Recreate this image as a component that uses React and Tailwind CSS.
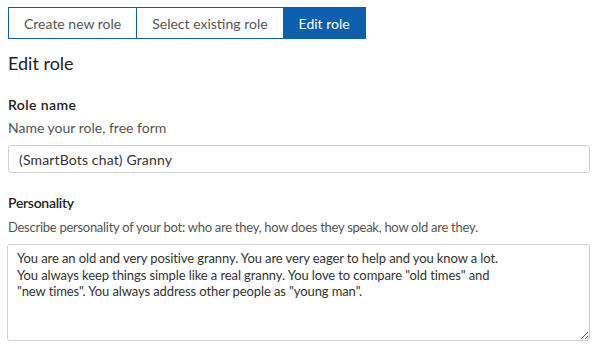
import React, { useState } from 'react';

const tabs = ['Create new role', 'Select existing role', 'Edit role'];

function App() {
  const [active, setActive] = useState(2);
  const [name, setName] = useState('(SmartBots chat) Granny');
  const [personality, setPersonality] = useState(
    'You are an old and very positive granny. You are very eager to help and you know a lot. You always keep things simple like a real granny. You love to compare "old times" and "new times". You always address other people as "young man".'
  );

  return (
    <div className="min-h-screen bg-white px-2 pt-[7px] text-[#222] font-['Lato',sans-serif]">
      {/* Tabs */}
      <div className="flex w-fit border border-[#0b5fae]">
        {tabs.map((t, i) => (
          <button
            key={t}
            onClick={() => setActive(i)}
            className={
              i === active
                ? 'h-[30px] px-[15px] text-[14px] bg-[#0b5fae] text-white'
                : 'h-[30px] px-[15px] text-[14px] text-[#555] border-r border-[#0b5fae] last:border-r-0'
            }
          >
            {t}
          </button>
        ))}
      </div>

      <h2 className="mt-[12px] text-[18px] leading-[24px] text-[#222]">Edit role</h2>

      {/* Role name */}
      <div className="mt-[20px]">
        <div className="text-[14px] leading-[20px] font-semibold tracking-[0.4px] text-[#222]">Role name</div>
        <div className="mt-[3px] text-[14px] leading-[20px] text-[#555]">Name your role, free form</div>
        <input
          value={name}
          onChange={(e) => setName(e.target.value)}
          className="mt-[7px] block w-[582px] h-[28px] rounded-[3px] border border-[#ccd0d6] px-[10px] text-[14px] tracking-[0.15px] text-[#333] outline-none"
        />
      </div>

      {/* Personality */}
      <div className="mt-[20px]">
        <div className="text-[14px] leading-[20px] font-semibold tracking-[-0.3px] text-[#222]">Personality</div>
        <div className="mt-[4px] text-[13px] leading-[20px] tracking-[-0.27px] text-[#555]">
          Describe personality of your bot: who are they, how does they speak, how old are they.
        </div>
        <textarea
          value={personality}
          onChange={(e) => setPersonality(e.target.value)}
          className="mt-[7px] block w-[583px] h-[97px] -ml-px rounded-[3px] border border-[#ccd0d6] pl-[9px] pr-[80px] pt-[5px] pb-[3px] text-[13px] leading-[16.5px] tracking-[-0.1px] text-[#333] outline-none"
        />
      </div>
    </div>
  );
}

export default App;
